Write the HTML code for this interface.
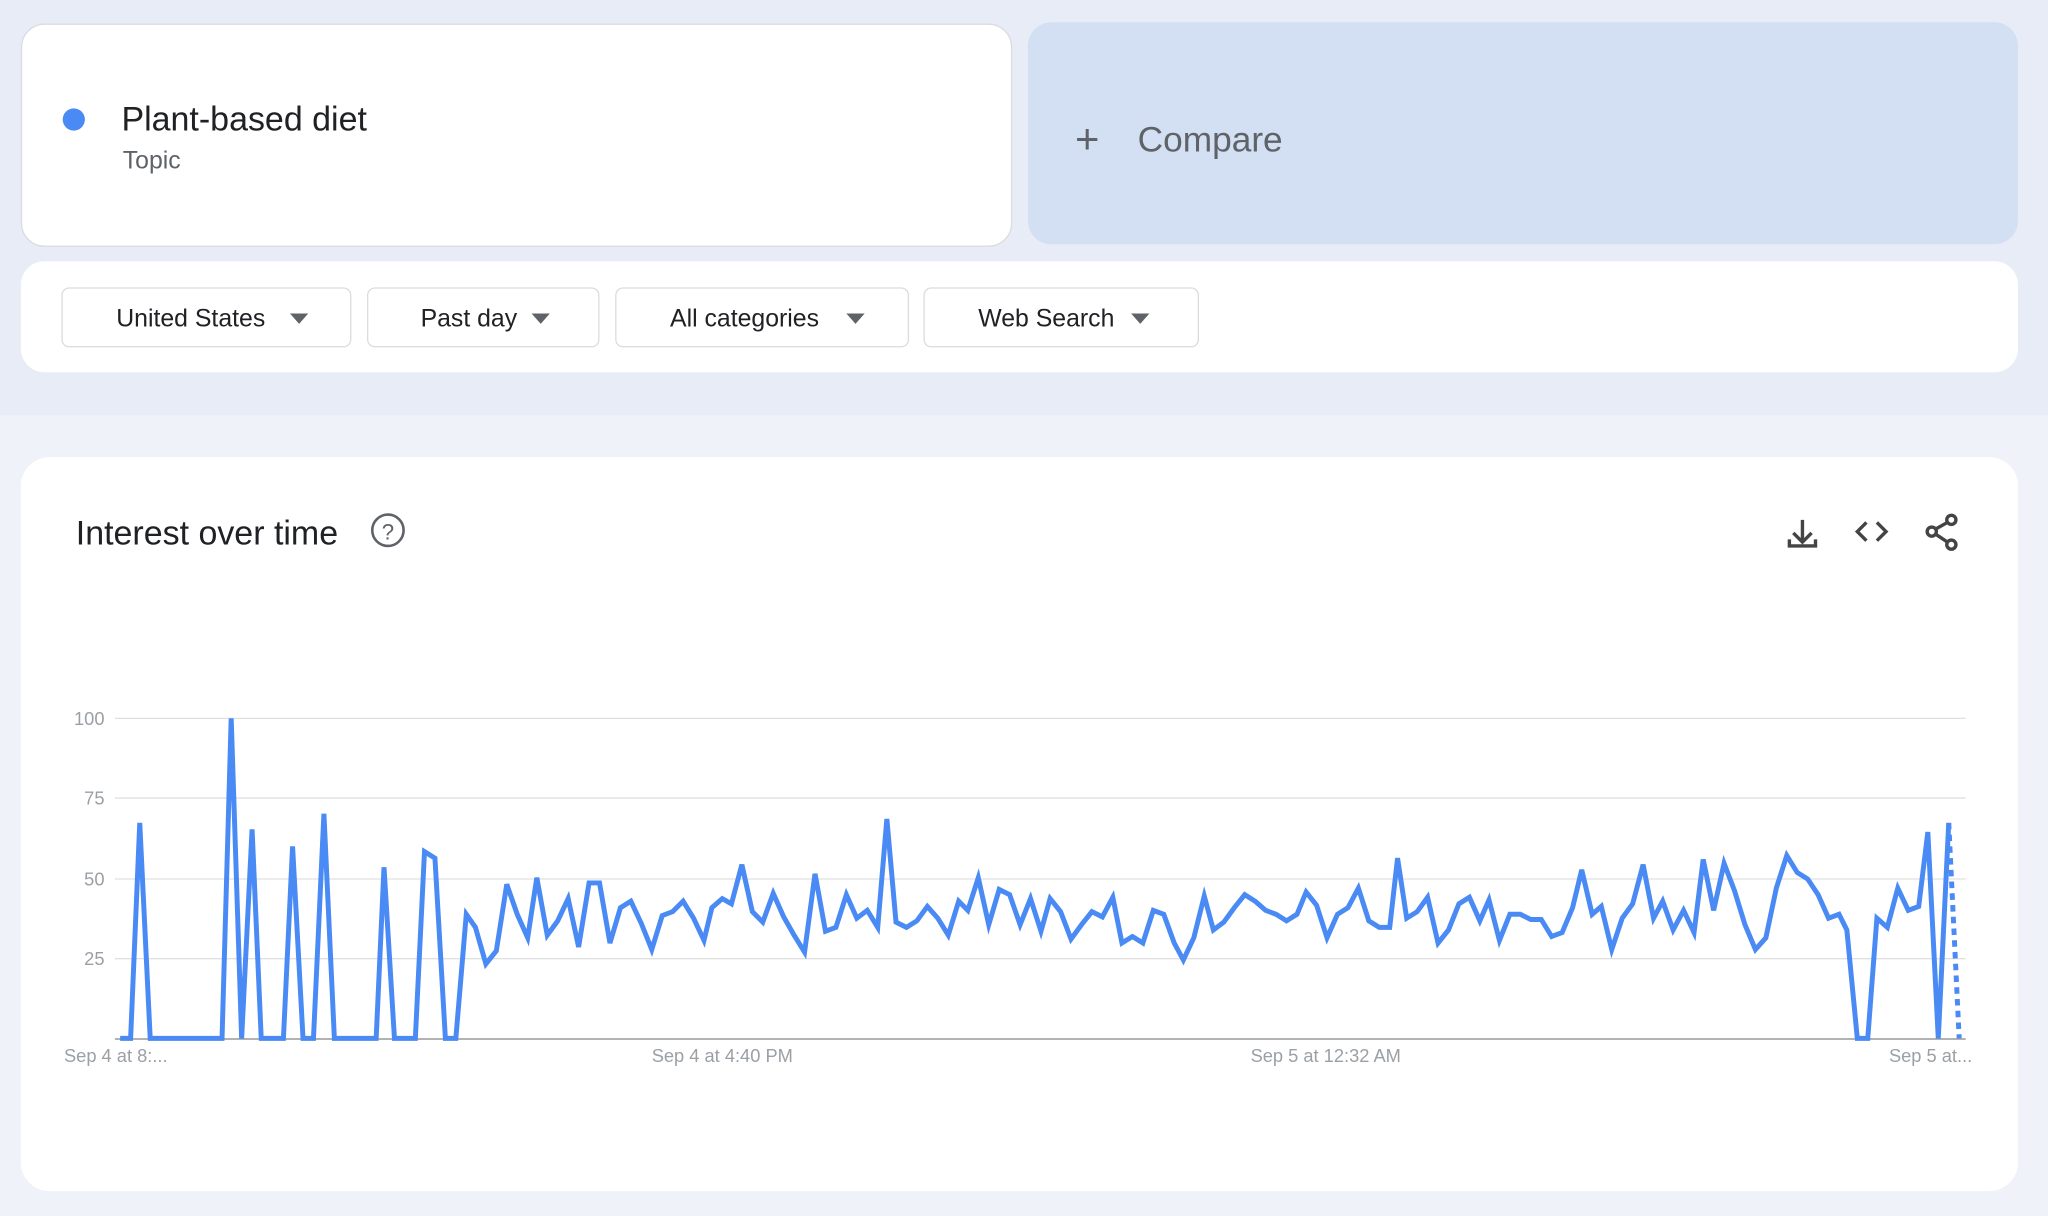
<!DOCTYPE html>
<html><head><meta charset="utf-8"><style>
html,body{margin:0;padding:0;width:2048px;height:1216px;overflow:hidden;background:#eff2f8;}
#w{position:absolute;left:0;top:0;width:1568px;height:931px;transform:scale(1.306122);transform-origin:0 0;font-family:"Liberation Sans",sans-serif;}
.top{position:absolute;left:0;top:0;width:1568px;height:318px;background:#e8ecf6;}
.card1{position:absolute;left:16px;top:18px;width:757px;height:169px;background:#fff;border:1px solid #dadce0;border-radius:18px;}
.dot{position:absolute;left:48px;top:83px;width:17px;height:17px;border-radius:50%;background:#4a8af4;}
.t1{position:absolute;left:93px;top:76px;font-size:26px;color:#202124;}
.t2{position:absolute;left:94px;top:113px;font-size:19px;color:#5f6368;}
.cmp{position:absolute;left:787px;top:17px;width:758px;height:170px;background:#d3dff3;border-radius:18px;}
.cmp span{position:absolute;left:84px;top:75px;font-size:27px;color:#5f6368;}
.cmp b{position:absolute;left:36px;top:71px;font-size:32px;font-weight:normal;color:#5f6368;}
.bar{position:absolute;left:16px;top:200px;width:1529px;height:85px;background:#fff;border-radius:18px;}
.btn{position:absolute;top:220px;height:46px;border:1px solid #dadce0;border-radius:6px;background:#fff;font-size:19px;color:#202124;line-height:48px;box-sizing:border-box;}
.btn i{position:absolute;top:19px;width:0;height:0;border-left:7px solid transparent;border-right:7px solid transparent;border-top:8px solid #5f6368;}
.card2{position:absolute;left:16px;top:350px;width:1529px;height:562px;background:#fff;border-radius:22px;}
.h{position:absolute;left:58px;top:393px;font-size:26px;color:#202124;}
</style></head><body><div id="w">
<div class="top"></div>
<div class="card1"></div>
<div class="dot"></div>
<div class="t1">Plant-based diet</div>
<div class="t2">Topic</div>
<div class="cmp"><b>+</b><span>Compare</span></div>
<div class="bar"></div>
<div class="btn" style="left:47px;width:222px"><span style="position:absolute;left:41px">United States</span><i style="left:174px"></i></div>
<div class="btn" style="left:281px;width:178px"><span style="position:absolute;left:40px">Past day</span><i style="left:125px"></i></div>
<div class="btn" style="left:471px;width:225px"><span style="position:absolute;left:41px">All categories</span><i style="left:176px"></i></div>
<div class="btn" style="left:707px;width:211px"><span style="position:absolute;left:41px">Web Search</span><i style="left:158px"></i></div>
<div class="card2"></div>
<div class="h">Interest over time</div>
<svg style="position:absolute;left:0;top:0" width="1568" height="931" viewBox="0 0 1568 931">
<circle cx="297" cy="406" r="12" fill="none" stroke="#5f6368" stroke-width="2"/>
<text x="297" y="413" font-size="17" text-anchor="middle" fill="#5f6368" font-family="Liberation Sans">?</text>
<g fill="none" stroke="#444" stroke-width="2.6">
<path d="M1380 398v16M1373 408l7 7 7-7M1370 413v5h20v-5"/>
<path d="M1429 400l-7 7 7 7M1437 400l7 7-7 7"/>
<circle cx="1494" cy="398" r="3.5"/><circle cx="1494" cy="417" r="3.5"/><circle cx="1479" cy="407" r="3.5"/>
<path d="M1482 405l9-5M1482 409l9 6"/>
</g>
<g stroke="#e0e0e0" stroke-width="1"><line x1="88" y1="550" x2="1505" y2="550"/><line x1="88" y1="611" x2="1505" y2="611"/><line x1="88" y1="673" x2="1505" y2="673"/><line x1="88" y1="734" x2="1505" y2="734"/></g>
<line x1="88" y1="795.5" x2="1505" y2="795.5" stroke="#999" stroke-width="1.2"/>
<g font-size="14" fill="#9aa0a6" font-family="Liberation Sans"><text x="80" y="555" text-anchor="end">100</text><text x="80" y="616" text-anchor="end">75</text><text x="80" y="678" text-anchor="end">50</text><text x="80" y="739" text-anchor="end">25</text>
<text x="49" y="813">Sep 4 at 8:...</text><text x="553" y="813" text-anchor="middle">Sep 4 at 4:40 PM</text><text x="1015" y="813" text-anchor="middle">Sep 5 at 12:32 AM</text><text x="1510" y="813" text-anchor="end">Sep 5 at...</text></g>
<polyline fill="none" stroke="#4a8af4" stroke-width="3.8" stroke-linejoin="miter" points="92,795 100,795 107,630 115,795 170,795 177,550 185,795 193,635 200,795 217,795 224,648 232,795 240,795 248,623 256,795 288,795 294,664 302,795 318,795 325,652 333,657 341,795 349,795 357,700 364,710 372,738 380,728 388,677 396,700 404,718 411,672 419,716 427,705 435,688 443,725 451,676 459,676 467,722 475,695 483,690 491,707 499,727 507,701 515,698 523,690 531,703 539,720 545,695 553,688 560,692 568,662 576,698 584,706 592,684 600,702 608,716 616,729 624,669 632,713 640,710 648,685 656,703 664,697 672,710 679,627 686,706 694,710 702,705 710,694 718,703 726,716 734,690 741,697 749,672 757,708 765,681 773,685 781,708 789,688 797,713 804,688 812,698 820,719 828,708 836,698 844,702 852,687 859,722 867,717 875,722 883,697 891,700 899,722 906,735 914,718 922,686 929,712 937,706 945,695 953,685 961,690 969,697 977,700 985,705 993,700 1000,683 1008,693 1016,718 1024,700 1032,695 1040,680 1048,705 1056,710 1064,710 1070,657 1077,703 1085,698 1093,687 1101,722 1109,712 1117,692 1125,687 1133,705 1140,689 1148,720 1156,700 1164,700 1172,704 1180,704 1188,717 1196,714 1204,695 1211,666 1219,700 1226,694 1234,727 1242,703 1250,692 1258,662 1266,703 1273,690 1281,712 1289,697 1297,714 1304,658 1312,697 1320,661 1328,682 1336,708 1344,727 1352,718 1360,680 1368,655 1376,668 1384,673 1392,685 1400,703 1408,700 1414,712 1422,795 1430,795 1437,703 1445,710 1453,680 1461,697 1469,694 1476,637 1484,795 1492,630"/>
<line x1="1492" y1="630" x2="1500" y2="795" stroke="#4a8af4" stroke-width="3.8" stroke-dasharray="5 4"/>
</svg>
</div></body></html>
